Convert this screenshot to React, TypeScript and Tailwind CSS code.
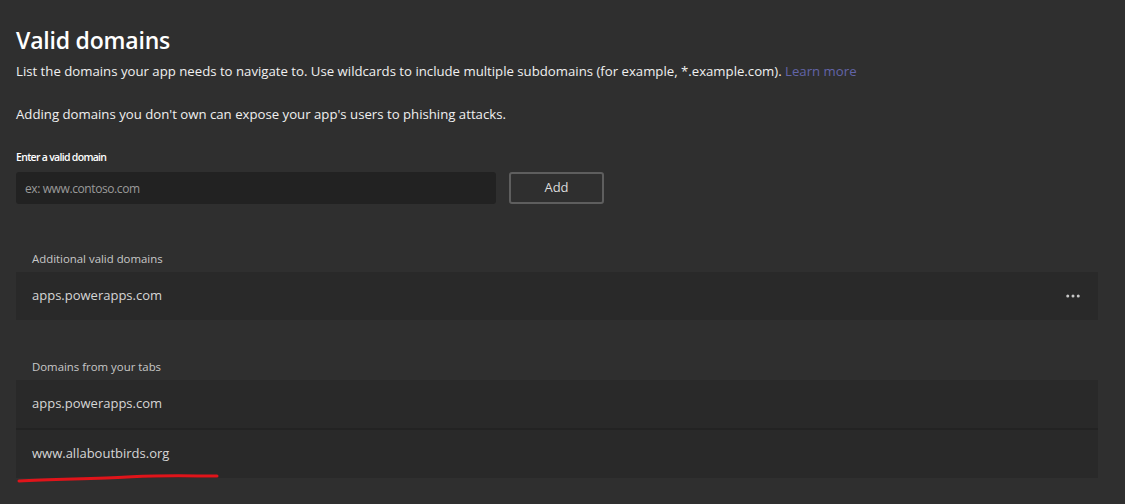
import { MoreHorizontal } from 'lucide-react';

const font = { fontFamily: '"Open Sans", "Noto Sans", sans-serif' };

const DomainRow = ({ domain, menu, children }: { domain: string; menu?: boolean; children?: React.ReactNode }) => (
  <div className="relative flex h-12 items-center justify-between bg-[#292929] pl-4 pr-4">
    <span className="text-[13px] text-[#d6d6d6]">{domain}</span>
    {menu && <MoreHorizontal size={18} className="text-[#c8c8c8]" />}
    {children}
  </div>
);

export default function App() {
  return (
    <div className="min-h-[504px] w-[1125px] bg-[#2f2f2f] pl-4 pr-[27px] pt-[24px] text-white" style={font}>
      <h1 className="text-[23px] font-semibold leading-8 tracking-[-0.2px]">Valid domains</h1>
      <p className="mt-[5px] text-[13.2px] leading-5 text-[#f0f0f0]">
        List the domains your app needs to navigate to. Use wildcards to include multiple subdomains (for example,
        *.example.com). <span className="text-[#6264a7]">Learn more</span>
      </p>
      <p className="mt-[23px] text-[13.2px] leading-5 text-[#f0f0f0]">
        Adding domains you don't own can expose your app's users to phishing attacks.
      </p>

      <label className="mt-[25px] block text-[10.5px] font-semibold leading-4 tracking-[-0.7px]">Enter a valid domain</label>
      <div className="mt-[7px] flex items-center gap-[13px]">
        <input
          placeholder="ex: www.contoso.com"
          className="h-8 w-[480px] rounded-[3px] bg-[#222222] pl-[9px] text-[12px] tracking-[-0.4px] text-white placeholder-[#9a9a9a] outline-none"
        />
        <button className="h-8 w-[95px] rounded-[3px] border-2 border-[#5e5e5e] text-[13px] text-[#dcdcdc]">Add</button>
      </div>

      <div className="mt-[47px] px-4 text-[11.4px] leading-4 text-[#c8c8c8]">Additional valid domains</div>
      <div className="mt-[5px]">
        <DomainRow domain="apps.powerapps.com" menu />
      </div>

      <div className="mt-[39px] px-4 text-[11.4px] leading-4 text-[#c8c8c8]">Domains from your tabs</div>
      <div className="mt-[5px] flex flex-col gap-[2px] bg-[#232323]">
        <DomainRow domain="apps.powerapps.com" />
        <DomainRow domain="www.allaboutbirds.org">
          <svg className="absolute left-[1px] top-[44px]" width="206" height="12" viewBox="0 0 206 12">
            <path
              d="M2 7 C40 5, 80 5, 110 3 C140 1, 175 2, 200 2"
              fill="none"
              stroke="#e0141a"
              strokeWidth="3"
              strokeLinecap="round"
            />
          </svg>
        </DomainRow>
      </div>
    </div>
  );
}
